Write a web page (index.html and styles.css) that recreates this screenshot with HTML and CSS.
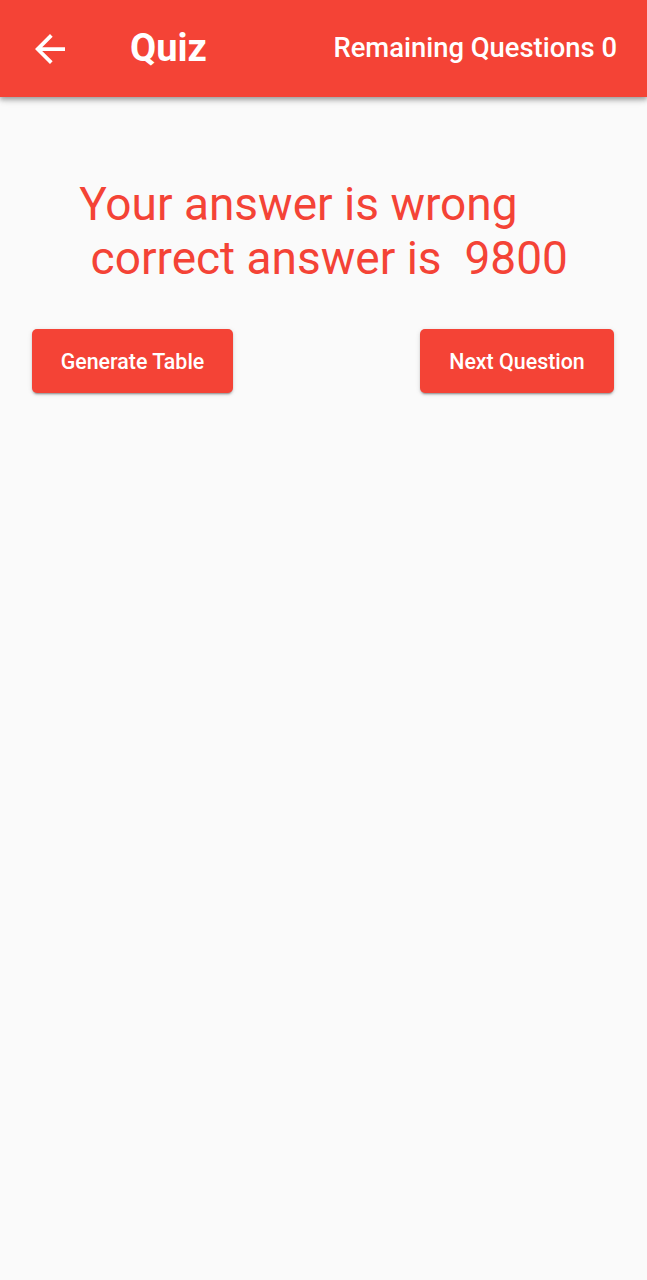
FILE: index.html
```html
<!DOCTYPE html>
<html>
<head>
<meta charset="utf-8">
<link rel="stylesheet" href="styles.css">
</head>
<body>
<header class="appbar">
  <svg class="back" viewBox="4 4 16 16" width="30" height="30"><path d="M20 11H7.83l5.59-5.59L12 4l-8 8 8 8 1.41-1.41L7.83 13H20v-2z" fill="#fff"/></svg>
  <h1 class="title">Quiz</h1>
  <div class="remaining">Remaining Questions 0</div>
</header>
<main class="content">
  <div class="message"><div class="msg-inner">Your answer is wrong
 correct answer is  9800</div></div>
  <div class="actions">
    <button class="btn btn-gen">Generate Table</button>
    <button class="btn btn-next">Next Question</button>
  </div>
</main>
</body>
</html>
```
FILE: styles.css
```css
* { box-sizing: border-box; }
html, body { margin: 0; padding: 0; }
body {
  background: #fafafa;
  font-family: Roboto, "Noto Sans", sans-serif;
  width: 647px;
  height: 1280px;
  overflow: hidden;
}
.appbar {
  height: 97px;
  background: #f44336;
  display: flex;
  align-items: center;
  padding: 0 30px 0 35px;
  box-shadow: 0 2px 4px rgba(0,0,0,0.2), 0 4px 5px rgba(0,0,0,0.14), 0 1px 10px rgba(0,0,0,0.12);
  color: #fff;
  position: relative;
  z-index: 1;
}
.back { display: block; margin-top: 1px; }
.title {
  margin: 0 0 2px 65px;
  font-size: 38px;
  font-weight: 700;
  line-height: 1;
  flex: 1;
}
.remaining {
  font-size: 27.4px;
  font-weight: 500;
  margin-bottom: 2px;
}
.content {
  padding-top: 80px;
}
.message {
  display: flex;
  justify-content: center;
}
.msg-inner {
  white-space: pre;
  color: #f44336;
  font-size: 46px;
  line-height: 54px;
  text-align: left;
}
.actions {
  display: flex;
  justify-content: space-between;
  padding: 0 33px 0 32px;
  margin-top: 44px;
}
.btn {
  height: 64px;
  border: none;
  border-radius: 5px;
  background: #f44336;
  color: #fff;
  font-family: Roboto, sans-serif;
  font-size: 21.4px;
  font-weight: 500;
  box-shadow: 0 3px 1px -2px rgba(0,0,0,0.2), 0 2px 2px rgba(0,0,0,0.14), 0 1px 5px rgba(0,0,0,0.12);
}
.btn-gen { width: 201px; }
.btn-next { width: 194px; }
```
